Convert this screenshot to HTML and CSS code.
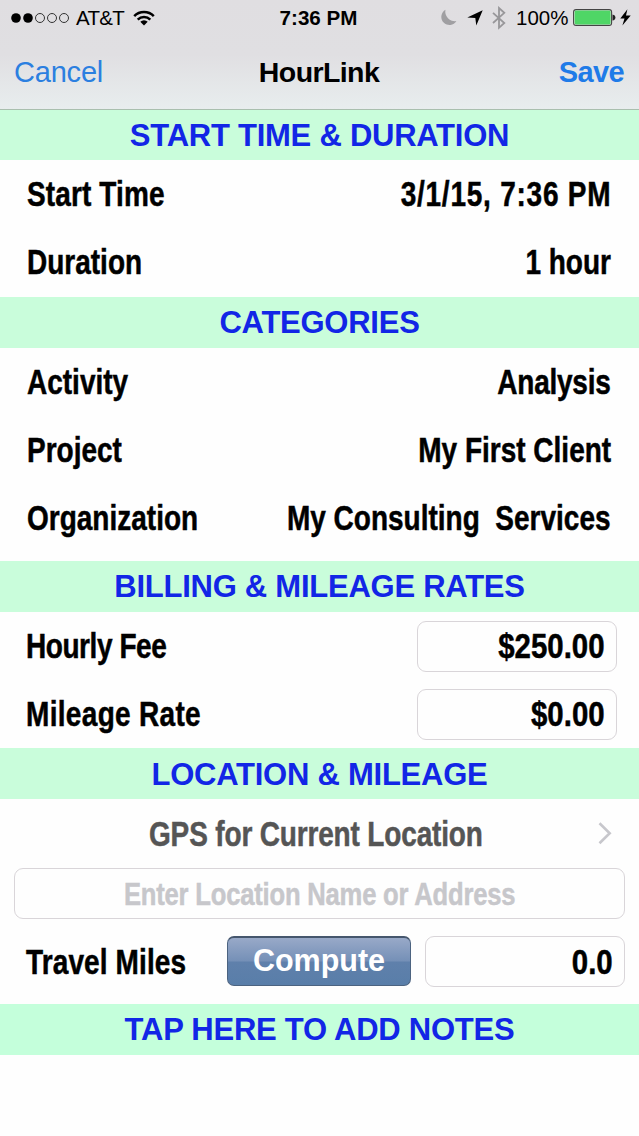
FILE: index.html
```html
<!DOCTYPE html>
<html lang="en">
<head>
  <meta charset="UTF-8">
  <title>HourLink</title>
  <meta name="viewport" content="width=device-width, initial-scale=1.0">
  <link rel="stylesheet" href="styles.css">
</head>
<body>
  <header class="top">
    <div class="status">
      <div class="status-left">
        <svg width="58" height="12" viewBox="0 0 58 12">
          <circle cx="5" cy="6" r="4.8"/>
          <circle cx="17" cy="6" r="4.8"/>
          <g fill="none" stroke="#333" stroke-width="1">
            <circle cx="29" cy="6" r="4.5"/>
            <circle cx="41" cy="6" r="4.5"/>
            <circle cx="53" cy="6" r="4.5"/>
          </g>
        </svg>
        <span class="carrier">AT&amp;T</span>
        <svg class="wifi" width="22" height="16" viewBox="0 0 22 16">
          <g fill="none" stroke="#000" stroke-width="2.5">
            <path d="M1.2 6.1 A13.8 13.8 0 0 1 20.8 6.1"/>
            <path d="M4.7 9.6 A9 9 0 0 1 17.3 9.6"/>
          </g>
          <path d="M7.3 11.8 A5.2 5.2 0 0 1 14.7 11.8 L11 15.5 Z"/>
        </svg>
      </div>
      <div class="clock">7:36 PM</div>
      <div class="status-right">
        <svg width="17" height="17" viewBox="0 0 17 17">
          <path fill="#a09fa2" d="M5.5 .8 A8.1 8.1 0 1 0 16.4 12 A9.4 9.4 0 0 1 5.5 .8 Z"/>
        </svg>
        <svg class="arrow" width="16" height="16" viewBox="0 0 16 16">
          <path d="M15.7 .3 L9.3 15.6 L8.3 8 L.3 7.4 Z"/>
        </svg>
        <svg class="bluetooth" width="14" height="24" viewBox="0 0 14 24">
          <path fill="none" stroke="#98979a" stroke-width="1.8" d="M1 6.8 L12.3 17 L7 21.8 V2 L12.3 6.8 L1 17"/>
        </svg>
        <span class="percent">100%</span>
        <svg class="battery" width="43" height="17" viewBox="0 0 43 17">
          <rect x=".6" y=".6" width="38" height="15.8" rx="2.5" fill="#eee" stroke="#444" stroke-width="1.1"/>
          <rect x="1.6" y="1.6" width="36" height="13.8" rx="1.4" fill="#4fd666"/>
          <path fill="#222" d="M39.5 5.4 Q42.4 6 42.4 8.5 T39.5 11.6 Z"/>
        </svg>
        <svg class="bolt" width="11" height="17" viewBox="0 0 11 17">
          <path d="M7.4 .3 L.3 9.6 H4.5 L2.4 16.4 L10.7 6.6 H6 Z"/>
        </svg>
      </div>
    </div>
    <nav class="nav">
      <a class="cancel">Cancel</a>
      <h1>HourLink</h1>
      <a class="save">Save</a>
    </nav>
  </header>

  <!-- Start time and duration -->
  <h2 class="first">START TIME &amp; DURATION</h2>
  <section class="times">
    <div class="row"><span class="label start">Start Time</span><span class="value date">3/1/15, 7:36 PM</span></div>
    <div class="row"><span class="label">Duration</span><span class="value">1 hour</span></div>
  </section>

  <!-- Categories -->
  <h2>CATEGORIES</h2>
  <section class="categories">
    <div class="row"><span class="label">Activity</span><span class="value analysis">Analysis</span></div>
    <div class="row"><span class="label">Project</span><span class="value">My First Client</span></div>
    <div class="row"><span class="label organization">Organization</span><span class="value">My Consulting&nbsp; Services</span></div>
  </section>

  <!-- Rates -->
  <h2>BILLING &amp; MILEAGE RATES</h2>
  <section class="rates">
    <div class="row"><span class="label hourly">Hourly Fee</span><div class="field"><span class="value amount">$250.00</span></div></div>
    <div class="row"><span class="label mileage">Mileage Rate</span><div class="field"><span class="value amount">$0.00</span></div></div>
  </section>

  <!-- Location -->
  <h2 class="location-title">LOCATION &amp; MILEAGE</h2>
  <section class="location">
    <div class="gps">
      <span class="gps-text">GPS for Current Location</span>
      <svg width="14" height="24" viewBox="0 0 14 24">
        <path fill="none" stroke="#c7c7cc" stroke-width="2.6" d="M1.5 1.3 L11.7 11.3 L1.5 21.3"/>
      </svg>
    </div>
    <div class="field address"><span class="placeholder">Enter Location Name or Address</span></div>
    <div class="travel">
      <span class="label">Travel Miles</span>
      <div class="compute">Compute</div>
      <div class="field"><span class="value amount">0.0</span></div>
    </div>
  </section>

  <h2 class="notes">TAP HERE TO ADD NOTES</h2>
</body>
</html>
```
FILE: styles.css
```css
body {
  margin: 0;
  width: 639px;
  min-height: 1136px;
  background-color: #fefefe;
  font-family: "Liberation Sans", Arial, sans-serif;
  color: #000;
}
svg {
  display: block;
  flex: none;
}

/* status bar and nav bar */
.top {
  box-sizing: border-box;
  height: 110px;
  background: linear-gradient(#e0dee1 0, #e0dfe2 50%, #e8edee 100%);
  border-bottom: 1px solid #a9bfae;
}
.status, .nav {
  display: grid;
  align-items: center;
}
.status {
  grid-template-columns: 1fr auto 1fr;
  height: 35px;
  padding: 0 8px 0 11px;
  font-size: 21px;
}
.status-left, .status-right {
  display: flex;
  align-items: center;
}
.status-right {
  justify-content: flex-end;
}
.carrier {
  margin-left: 7px;
  width: 49px;
  font-size: 20.5px;
  letter-spacing: -0.7px;
}
.wifi {
  margin-left: 8px;
}
.clock {
  padding-right: 5px;
  font-size: 20.6px;
  font-weight: bold;
}
.arrow {
  margin-left: 10px;
}
.bluetooth {
  margin-left: 9px;
}
.percent {
  margin-left: 10px;
  width: 51px;
  font-size: 20.5px;
}
.battery {
  margin-left: 6px;
}
.bolt {
  margin-left: 4px;
}
.nav {
  grid-template-columns: 1fr auto 1fr;
  height: 74px;
  padding: 0 15px 0 14px;
  font-size: 29px;
}
.nav h1 {
  margin: 0;
  font-size: 28.5px;
  letter-spacing: -0.6px;
}
.cancel {
  color: #2b7fe0;
  letter-spacing: -0.2px;
}
.save {
  color: #1f7be8;
  font-weight: bold;
  letter-spacing: -0.6px;
  text-align: right;
}

/* green section bars */
h2 {
  margin: 0;
  height: 51px;
  line-height: 51px;
  background-color: #c9fddb;
  color: #1226e6;
  font-size: 31px;
  letter-spacing: -0.25px;
  text-align: center;
  white-space: nowrap;
}
.first {
  height: 50px;
}
.location-title {
  line-height: 53px;
}
.notes {
  background-color: #c4ffdb;
}

/* condensed text */
.label, .value, .gps-text, .placeholder {
  display: inline-block;
  font-size: 35px;
  font-weight: bold;
  line-height: 40px;
  white-space: nowrap;
  transform: scaleX(0.8);
  transform-origin: left center;
  -webkit-text-stroke: 0.5px currentColor;
}
.value {
  transform-origin: right center;
}
.start {
  letter-spacing: 0.15px;
}
.date {
  letter-spacing: 0.95px;
}
.analysis {
  letter-spacing: -0.3px;
}
.organization {
  width: 170px;
}
.hourly {
  letter-spacing: -0.55px;
}
.mileage {
  letter-spacing: 0.4px;
}
.value.amount {
  transform: scaleX(0.84);
}
.row {
  display: flex;
  align-items: center;
  justify-content: space-between;
  height: 68px;
  padding: 0 28px 0 27px;
}
.times {
  height: 137px;
}
.categories {
  height: 213px;
}
.rates {
  height: 136px;
}
.rates .row {
  padding: 0 22px 0 26px;
}
.field {
  box-sizing: border-box;
  display: flex;
  align-items: center;
  justify-content: flex-end;
  width: 200px;
  height: 51px;
  padding-right: 11px;
  border: 1px solid #d9d5d9;
  border-radius: 9px;
}

.location {
  box-sizing: border-box;
  height: 205px;
  padding: 0 14px;
}
.gps {
  display: flex;
  align-items: center;
  justify-content: center;
  height: 69px;
  padding-right: 13px;
}
.gps svg {
  margin-left: auto;
}
.gps-text {
  margin-left: 135px;
  color: #555;
  letter-spacing: -0.2px;
}
.address {
  width: 100%;
  justify-content: center;
  padding: 0;
}
.placeholder {
  color: #c7c7cb;
  font-size: 32px;
  letter-spacing: -0.25px;
  transform-origin: center;
}
.travel {
  display: flex;
  align-items: center;
  height: 51px;
  margin-top: 17px;
  padding-left: 12px;
}
.travel .label {
  width: 201px;
  letter-spacing: 0.15px;
}
.compute {
  box-sizing: border-box;
  width: 185px;
  height: 50px;
  margin: 0 14px 1px 0;
  border: 1px solid #4c6380;
  border-top: 2px solid #45566d;
  border-radius: 7px;
  background: linear-gradient(#98a9c8 0, #7590b7 49%, #5f80ab 51%, #597ea9 100%);
  color: #fff;
  font-size: 30.5px;
  font-weight: bold;
  line-height: 45px;
  text-align: center;
}
```
